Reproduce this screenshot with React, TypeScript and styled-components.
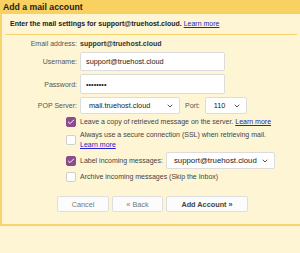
import React from 'react'
import styled, { createGlobalStyle } from 'styled-components'
import { ChevronDown, Check } from 'lucide-react'

const GlobalStyle = createGlobalStyle`
  body {
    margin: 0;
    background: #fef5d5;
    font-family: 'Liberation Sans', Arial, sans-serif;
    color: #444;
  }
`

const Header = styled.div`
  height: 14px;
  padding-left: 3px;
  background: #f8d160;
  color: #222;
  font-size: 8.7px;
  font-weight: bold;
  line-height: 14px;
`

const Panel = styled.div`
  border-left: 2px solid #f9d46a;
  border-bottom: 2px solid #f9d46a;
  padding-bottom: 12px;
`

const Intro = styled.div`
  margin: 0 3px;
  padding: 0 5px;
  height: 20px;
  line-height: 20px;
  border-bottom: 1px solid #f9d46a;
  font-size: 7px;
  font-weight: bold;
  color: #222;
`

const Link = styled.a`
  color: #2323cc;
  text-decoration: underline;
  font-weight: normal;
  cursor: pointer;
`

const Form = styled.div`
  display: grid;
  grid-template-columns: 75px 1fr;
  column-gap: 3px;
  row-gap: 3px;
  align-items: center;
  padding-top: 3px;
  font-size: 7px;
`

const Label = styled.div`
  text-align: right;
  color: #555;
  line-height: 11px;
`

const Value = styled.div`
  font-weight: bold;
  color: #333;
  line-height: 11px;
`

const Input = styled.input<{ $h: number }>`
  box-sizing: border-box;
  width: 145px;
  height: ${p => p.$h}px;
  padding: 0 5px;
  border: 1px solid #dcdcdc;
  border-radius: 2px;
  background: #fff;
  font-family: inherit;
  font-size: 7.3px;
  color: #222;
  outline: none;
`

const Inline = styled.div<{ $gap: number }>`
  display: flex;
  align-items: center;
  gap: ${p => p.$gap}px;
`

const Select = styled.div<{ $w: number; $pad: number; $fs?: number }>`
  box-sizing: border-box;
  display: flex;
  align-items: center;
  justify-content: space-between;
  width: ${p => p.$w}px;
  height: 17px;
  padding: 0 5px 0 ${p => p.$pad}px;
  border: 1px solid #dcdcdc;
  border-radius: 2px;
  background: #fff;
  font-size: ${p => p.$fs ?? 7.3}px;
  color: #222;
  white-space: nowrap;
`

const Box = styled.div<{ $on?: boolean }>`
  justify-self: end;
  margin-right: 1px;
  box-sizing: border-box;
  width: 10px;
  height: 10px;
  border-radius: 2px;
  display: flex;
  align-items: center;
  justify-content: center;
  background: ${p => (p.$on ? '#8d4a8c' : '#fff')};
  border: 1px solid ${p => (p.$on ? '#8d4a8c' : '#cfcfcf')};
`

const CheckText = styled.div`
  color: #444;
  line-height: 9.5px;
`

const Buttons = styled.div`
  display: flex;
  gap: 3px;
  margin: 14px 0 0 55px;
`

const Button = styled.button<{ $w: number; $primary?: boolean }>`
  box-sizing: border-box;
  width: ${p => p.$w}px;
  height: 16px;
  padding: 0;
  border: 1px solid #dedede;
  border-radius: 2px;
  background: #fcfcfc;
  font-family: inherit;
  font-size: 7.3px;
  font-weight: ${p => (p.$primary ? 'bold' : 'normal')};
  color: ${p => (p.$primary ? '#444' : '#777')};
`

function CheckBox({ on }: { on?: boolean }) {
  return <Box $on={on}>{on && <Check size={8} color="#fff" strokeWidth={3} />}</Box>
}

export default function App() {
  return (
    <>
      <GlobalStyle />
      <Header>Add a mail account</Header>
      <Panel>
        <Intro>
          Enter the mail settings for support@truehost.cloud. <Link>Learn more</Link>
        </Intro>
        <Form>
          <Label>Email address:</Label>
          <Value>support@truehost.cloud</Value>

          <Label>Username:</Label>
          <Input $h={19} defaultValue="support@truehost.cloud" />

          <Label>Password:</Label>
          <Input $h={20} type="password" defaultValue="xxxxxxxx" />

          <Label>POP Server:</Label>
          <Inline $gap={5}>
            <Select $w={100} $pad={8}>
              mail.truehost.cloud
              <ChevronDown size={8} color="#333" strokeWidth={2.5} />
            </Select>
            <Label>Port:</Label>
            <Select $w={42} $pad={8}>
              110
              <ChevronDown size={8} color="#333" strokeWidth={2.5} />
            </Select>
          </Inline>

          <CheckBox on />
          <CheckText>
            Leave a copy of retrieved message on the server. <Link>Learn more</Link>
          </CheckText>

          <CheckBox />
          <CheckText>
            Always use a secure connection (SSL) when retrieving mail.
            <br />
            <Link>Learn more</Link>
          </CheckText>

          <CheckBox on />
          <Inline $gap={3}>
            <CheckText>Label incoming messages:</CheckText>
            <Select $w={109} $pad={7} $fs={7.8}>
              support@truehost.cloud
              <ChevronDown size={8} color="#333" strokeWidth={2.5} />
            </Select>
          </Inline>

          <CheckBox />
          <CheckText>Archive incoming messages (Skip the Inbox)</CheckText>
        </Form>
        <Buttons>
          <Button $w={52}>Cancel</Button>
          <Button $w={51}>« Back</Button>
          <Button $w={82} $primary>
            Add Account »
          </Button>
        </Buttons>
      </Panel>
    </>
  )
}
